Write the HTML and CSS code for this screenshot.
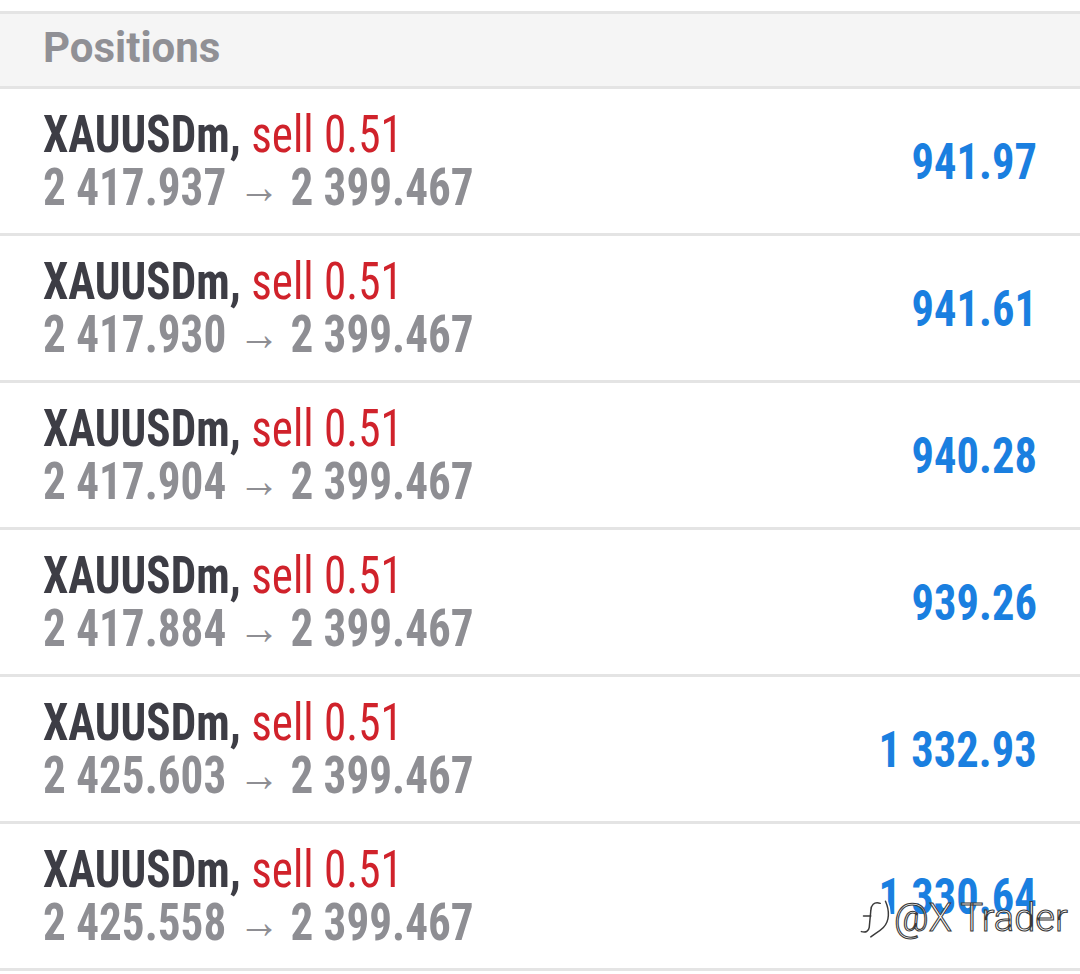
FILE: index.html
```html
<!DOCTYPE html>
<html lang="en">
<head>
    <meta charset="UTF-8">
    <meta name="viewport" content="width=device-width, initial-scale=1.0">
    <title>Positions</title>
    <link rel="stylesheet" href="styles.css">
</head>
<body>
    <div class="trade-list">
        <div class="section-header">Positions</div>

        <div class="position">
            <div class="position-info">
                <div class="symbol">XAUUSDm, <span class="side">sell 0.51</span></div>
                <div class="prices">2 417.937 <span class="arrow">&rarr;</span> 2 399.467</div>
            </div>
            <div class="profit">941.97</div>
        </div>

        <div class="position">
            <div class="position-info">
                <div class="symbol">XAUUSDm, <span class="side">sell 0.51</span></div>
                <div class="prices">2 417.930 <span class="arrow">&rarr;</span> 2 399.467</div>
            </div>
            <div class="profit">941.61</div>
        </div>

        <div class="position">
            <div class="position-info">
                <div class="symbol">XAUUSDm, <span class="side">sell 0.51</span></div>
                <div class="prices">2 417.904 <span class="arrow">&rarr;</span> 2 399.467</div>
            </div>
            <div class="profit">940.28</div>
        </div>

        <div class="position">
            <div class="position-info">
                <div class="symbol">XAUUSDm, <span class="side">sell 0.51</span></div>
                <div class="prices">2 417.884 <span class="arrow">&rarr;</span> 2 399.467</div>
            </div>
            <div class="profit">939.26</div>
        </div>

        <div class="position">
            <div class="position-info">
                <div class="symbol">XAUUSDm, <span class="side">sell 0.51</span></div>
                <div class="prices">2 425.603 <span class="arrow">&rarr;</span> 2 399.467</div>
            </div>
            <div class="profit">1 332.93</div>
        </div>

        <div class="position">
            <div class="position-info">
                <div class="symbol">XAUUSDm, <span class="side">sell 0.51</span></div>
                <div class="prices">2 425.558 <span class="arrow">&rarr;</span> 2 399.467</div>
            </div>
            <div class="profit">1 330.64</div>
        </div>
    </div>

    <!-- watermark over the last row -->
    <div class="watermark">
        <svg class="watermark-icon" width="38" height="44" viewBox="0 0 36 42">
            <g fill="none" stroke="#fff" stroke-width="4.5" stroke-linecap="round">
                <path d="M23 7C17 5 14 9 14 14L12.5 30C12 34 9 35 5 34"/>
                <path d="M7 19H14"/>
                <path d="M28 5C32 14 32 24 26 30C22 34 18 36 14 39"/>
            </g>
            <g fill="none" stroke="#3a3a3a" stroke-width="1.4" stroke-linecap="round">
                <path d="M23 7C17 5 14 9 14 14L12.5 30C12 34 9 35 5 34"/>
                <path d="M7 19H14"/>
                <path d="M28 5C32 14 32 24 26 30C22 34 18 36 14 39"/>
            </g>
        </svg>
        <span class="watermark-text">@X Trader</span>
    </div>
</body>
</html>
```

FILE: styles.css
```css
body {
    margin: 0;
    background: #fff;
    font-family: "Roboto Condensed", "Liberation Sans Narrow", "DejaVu Sans Condensed", Roboto, sans-serif;
    width: 1080px;
    height: 974px;
    position: relative;
    overflow: hidden;
}

.trade-list {
    padding-top: 11px;
}

.section-header {
    height: 72px;
    padding-left: 43px;
    background: #f5f5f5;
    border-top: 3px solid #e4e4e4;
    border-bottom: 3px solid #e4e4e4;
    font-family: Roboto, sans-serif;
    font-weight: 700;
    font-size: 42px;
    line-height: 68px;
    color: #909095;
}

.position {
    height: 144px;
    padding: 0 43px;
    display: flex;
    align-items: center;
    justify-content: space-between;
    border-bottom: 3px solid #e4e4e4;
}

/* the app font is narrower than Roboto Condensed */
.position-info {
    font-size: 52px;
    line-height: 52px;
    font-weight: 700;
    white-space: nowrap;
    transform: scaleX(0.868);
    transform-origin: left center;
}

.symbol {
    color: #3d3d45;
}

.side {
    color: #d0222b;
    font-weight: 400;
}

.prices {
    color: #8e8e93;
}

.arrow {
    display: inline-block;
    font-family: Roboto, sans-serif;
    font-size: 48px;
    font-weight: 400;
    vertical-align: 2px;
    margin: 0 0 0 2px;
}

.profit {
    color: #1a7fe0;
    font-size: 50px;
    font-weight: 700;
    padding-top: 2px;
    white-space: nowrap;
    transform: scaleX(0.89);
    transform-origin: right center;
}

.watermark {
    position: absolute;
    left: 856px;
    top: 896px;
    display: flex;
    align-items: center;
    white-space: nowrap;
}

.watermark-text {
    font-family: Roboto, sans-serif;
    font-weight: 300;
    font-size: 38px;
    color: #fff;
    -webkit-text-stroke: 1.1px #3a3a3a;
}
```
